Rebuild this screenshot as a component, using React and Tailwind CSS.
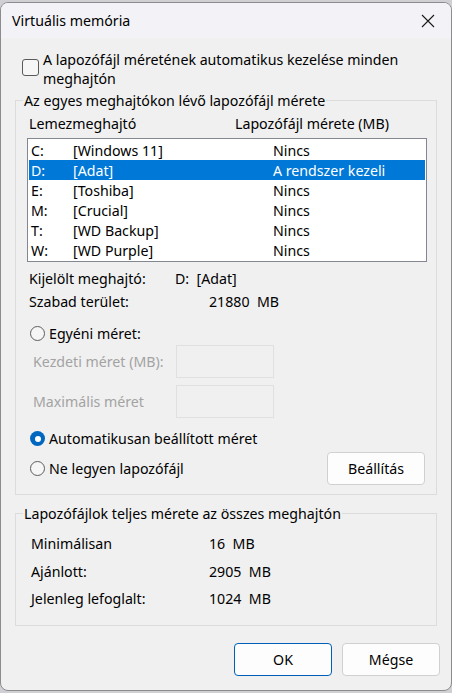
import React from "react";

const font = { fontFamily: '"Noto Sans", "Open Sans", sans-serif' };

const drives = [
  ["C:", "[Windows 11]", "Nincs"],
  ["D:", "[Adat]", "A rendszer kezeli"],
  ["E:", "[Toshiba]", "Nincs"],
  ["M:", "[Crucial]", "Nincs"],
  ["T:", "[WD Backup]", "Nincs"],
  ["W:", "[WD Purple]", "Nincs"],
];

const Radio = ({ checked }) =>
  checked ? (
    <span className="w-[15px] h-[15px] rounded-full bg-[#0067c0] grid place-items-center shrink-0">
      <span className="w-[6px] h-[6px] rounded-full bg-white" />
    </span>
  ) : (
    <span className="w-[15px] h-[15px] rounded-full border border-[#5d5d5d] bg-[#f6f6f6] shrink-0" />
  );

const App = () => {
  return (
    <div className="w-[452px] h-[693px] bg-[#cfcfd4] pt-[2px] text-[14.2px] leading-[19px] text-black" style={font}>
      <div className="h-[689px] rounded-[8px] border border-[#8c8c8c] bg-[#f0f0f0] overflow-hidden flex flex-col">
        {/* title bar */}
        <div className="h-[35px] bg-[#f3f2f7] flex items-center justify-between pl-[11px] pr-[16px]">
          <span>Virtuális memória</span>
          <svg width="14" height="14" viewBox="0 0 14 14">
            <path d="M1 1 L13 13 M13 1 L1 13" stroke="#1a1a1a" strokeWidth="1.1" />
          </svg>
        </div>

        {/* auto checkbox */}
        <div className="mt-[12px] pl-[21px] flex items-start gap-[4px]">
          <span className="mt-[9px] w-[17px] h-[17px] rounded-[3px] border border-[#5a5a5a] bg-[#f6f6f6] shrink-0" />
          <span className="w-[380px]">A lapozófájl méretének automatikus kezelése minden meghajtón</span>
        </div>

        {/* per drive */}
        <fieldset className="mt-[3px] mx-[14px] border border-[#dcdcdc] px-0 pb-[9px]">
          <legend className="ml-[7px] px-[1px]">Az egyes meghajtókon lévő lapozófájl mérete</legend>

          <div className="mt-[4px] pl-[13px] flex">
            <span className="w-[206px]">Lemezmeghajtó</span>
            <span>Lapozófájl mérete (MB)</span>
          </div>

          <div className="mt-[5px] ml-[11px] w-[400px] border border-[#828790] bg-white p-[1px]">
            {drives.map(([d, name, size], i) => (
              <div
                key={d}
                className={
                  "h-[20px] flex items-center pl-[2px] " +
                  (i === 1 ? "bg-[#0078d7] text-white" : "")
                }
              >
                <span className="w-[42px]">{d}</span>
                <span className="w-[200px]">{name}</span>
                <span>{size}</span>
              </div>
            ))}
          </div>

          <div className="mt-[7px] pl-[13px] flex">
            <span className="w-[146px]">Kijelölt meghajtó:</span>
            <span>D:&nbsp; [Adat]</span>
          </div>
          <div className="mt-[4px] pl-[13px] flex">
            <span className="w-[180px]">Szabad terület:</span>
            <span>21880&nbsp; MB</span>
          </div>

          <div className="mt-[13px] pl-[14px] flex items-center gap-[4px] h-[19px]">
            <Radio />
            <span>Egyéni méret:</span>
          </div>

          <div className="mt-[2px] pl-[17px] flex items-center h-[33px] text-[#a3a3a3]">
            <span className="w-[143px]">Kezdeti méret (MB):</span>
            <span className="w-[98px] h-[33px] border border-[#e0e0e0]" />
          </div>
          <div className="mt-[7px] pl-[17px] flex items-center h-[33px] text-[#a3a3a3]">
            <span className="w-[143px]">Maximális méret</span>
            <span className="w-[98px] h-[33px] border border-[#e0e0e0]" />
          </div>

          <div className="mt-[11px] pl-[14px] flex items-center gap-[4px] h-[19px]">
            <Radio checked />
            <span>Automatikusan beállított méret</span>
          </div>

          <div className="mt-[4px] pl-[14px] pr-[11px] flex items-center h-[33px]">
            <Radio />
            <span className="ml-[4px] flex-1">Ne legyen lapozófájl</span>
            <button className="w-[98px] h-[33px] rounded-[4px] border border-[#d0d0d0] bg-[#fdfdfd]">
              Beállítás
            </button>
          </div>
        </fieldset>

        {/* totals */}
        <fieldset className="mt-[9px] mx-[14px] border border-[#dcdcdc] px-0 pb-[17px]">
          <legend className="ml-[7px] px-[1px]">Lapozófájlok teljes mérete az összes meghajtón</legend>
          <div className="mt-[11px] pl-[15px] flex">
            <span className="w-[178px]">Minimálisan</span>
            <span>16&nbsp; MB</span>
          </div>
          <div className="mt-[9px] pl-[15px] flex">
            <span className="w-[178px]">Ajánlott:</span>
            <span>2905&nbsp; MB</span>
          </div>
          <div className="mt-[8px] pl-[15px] flex">
            <span className="w-[178px]">Jelenleg lefoglalt:</span>
            <span>1024&nbsp; MB</span>
          </div>
        </fieldset>

        {/* buttons */}
        <div className="mt-[17px] pr-[11px] flex justify-end gap-[10px]">
          <button className="w-[98px] h-[33px] rounded-[4px] border border-[#005fb8] bg-[#fdfdfd]">OK</button>
          <button className="w-[98px] h-[33px] rounded-[4px] border border-[#d0d0d0] bg-[#fdfdfd]">Mégse</button>
        </div>
      </div>
    </div>
  );
};

export default App;
